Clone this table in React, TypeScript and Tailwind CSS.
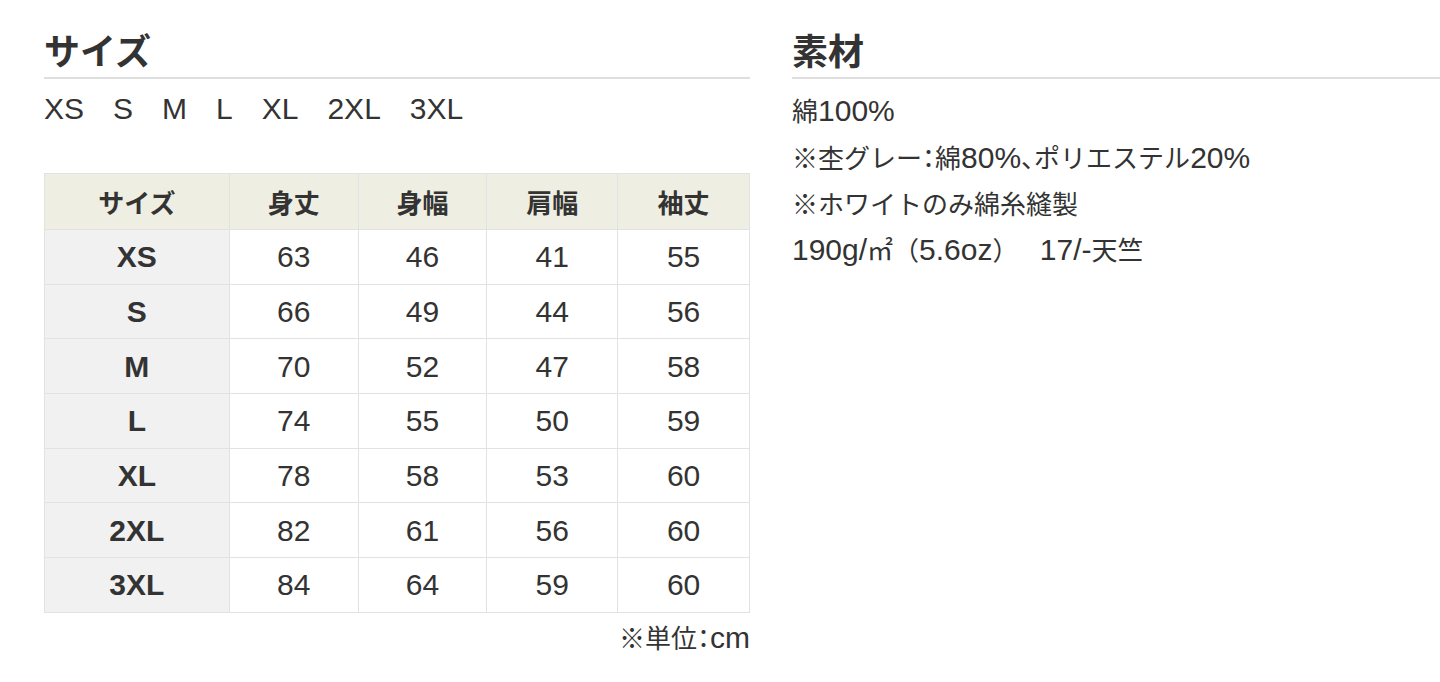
import React, { FC } from 'react';

const sizes = ['XS', 'S', 'M', 'L', 'XL', '2XL', '3XL'];

const headers = ['サイズ', '身丈', '身幅', '肩幅', '袖丈'];

const rows: [string, number, number, number, number][] = [
  ['XS', 63, 46, 41, 55],
  ['S', 66, 49, 44, 56],
  ['M', 70, 52, 47, 58],
  ['L', 74, 55, 50, 59],
  ['XL', 78, 58, 53, 60],
  ['2XL', 82, 61, 56, 60],
  ['3XL', 84, 64, 59, 60],
];

const colWidths = ['w-[185px]', 'w-[129px]', 'w-[129px]', 'w-[131px]', 'w-[132px]'];

const materials = [
  '綿100%',
  '※杢グレー：綿80%、ポリエステル20%',
  '※ホワイトのみ綿糸縫製',
  '190g/㎡（5.6oz）　 17/-天竺',
];

const latinFont = "font-['Liberation_Sans',sans-serif]";

// Latin runs are set a bit larger, like the Latin glyphs of a Japanese system font
const Mixed: FC<{ text: string }> = ({ text }) => (
  <>
    {text.split(/([\x20-\x7E]+|[：、])/).map((part, i) => {
      if (!part) return null;
      if (/^[\x20-\x7E]+$/.test(part)) {
        return (
          <span key={i} className={`${latinFont} text-[1.154em] whitespace-pre`}>
            {part}
          </span>
        );
      }
      if (part === '：' || part === '、') {
        return (
          <span key={i} className="[font-feature-settings:'halt']">
            {part}
          </span>
        );
      }
      return <span key={i}>{part}</span>;
    })}
  </>
);

const SectionTitle: FC<{ title: string }> = ({ title }) => (
  <h2 className="text-[36px] font-bold leading-[44px] pt-[27px] pb-[6px] border-b-2 border-[#dedede] text-[#333]">
    {title}
  </h2>
);

const App: FC = () => {
  return (
    <div className="w-[1440px] h-[682px] overflow-hidden bg-white text-[#333] flex pl-[44px] gap-[42px] font-['Noto_Sans_CJK_JP','Noto_Sans',sans-serif]">
      {/* size column */}
      <div className="w-[706px] shrink-0">
        <SectionTitle title="サイズ" />
        <div className={`flex gap-[29px] text-[30px] leading-[34px] mt-[13px] ${latinFont}`}>
          {sizes.map((s) => (
            <span key={s}>{s}</span>
          ))}
        </div>

        <table className="mt-[47px] border-collapse border border-[#e2e2e2] w-[706px]">
          <thead>
            <tr className="bg-[#eeeee2] h-[56px] text-[26px]">
              {headers.map((h, i) => (
                <th
                  key={h}
                  className={`${colWidths[i]} border border-[#e2e2e2] font-bold text-center`}
                >
                  {h}
                </th>
              ))}
            </tr>
          </thead>
          <tbody className={`${latinFont} text-[30px]`}>
            {rows.map(([size, ...values]) => (
              <tr key={size} className="h-[54.7px]">
                <td className="bg-[#f1f1f1] border border-[#e2e2e2] font-bold text-center">
                  {size}
                </td>
                {values.map((v, i) => (
                  <td key={i} className="border border-[#e2e2e2] text-center">
                    {v}
                  </td>
                ))}
              </tr>
            ))}
          </tbody>
        </table>
        <p className="text-right text-[26px] leading-[34px] mt-[7px]">
          <Mixed text="※単位：cm" />
        </p>
      </div>

      {/* material column */}
      <div className="flex-1">
        <SectionTitle title="素材" />
        <div className="mt-[8px] text-[26px] leading-[45.5px]">
          {materials.map((m) => (
            <p key={m}>
              <Mixed text={m} />
            </p>
          ))}
        </div>
      </div>
    </div>
  );
};

export default App;
